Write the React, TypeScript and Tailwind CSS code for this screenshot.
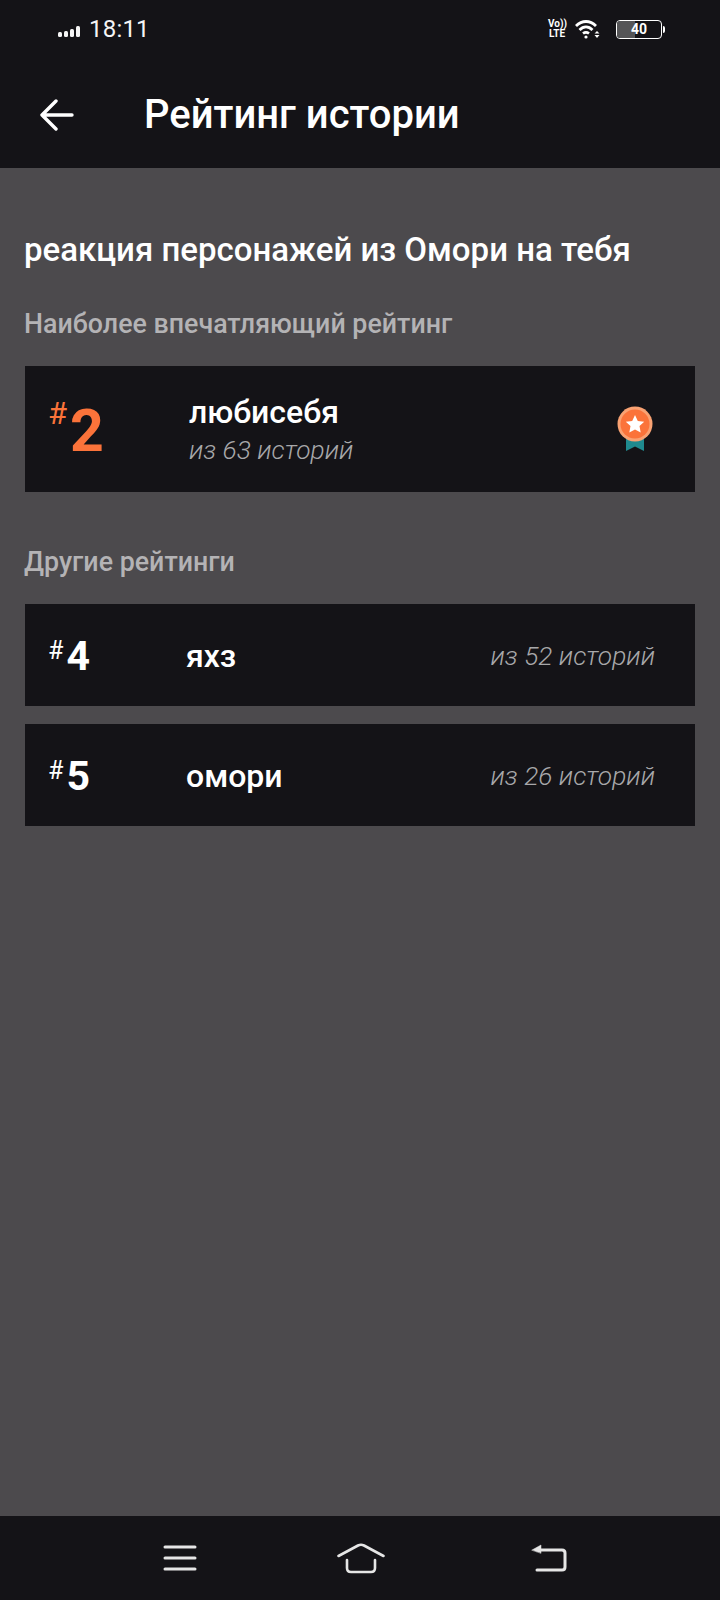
function StatusBar() {
  return (
    <div className="h-[60px] flex items-start justify-between pl-[58px] pr-[55px] pt-[14px]">
      <div className="flex items-center gap-[7px]">
        <svg width="24" height="12" viewBox="0 0 24 12" fill="#f5f5f5" className="mt-[3px]">
          <rect x="0" y="7" width="4" height="5" rx="1.5" />
          <rect x="6" y="6" width="4" height="6" rx="1.5" />
          <rect x="12" y="4" width="4" height="8" rx="1.5" />
          <rect x="18" y="1" width="4" height="11" rx="1.5" />
        </svg>
        <span className="text-[24px] leading-[30px] text-[#f5f5f5] tracking-[0.2px]">18:11</span>
      </div>
      <div className="flex items-center h-[30px]">
        <div className="w-[18px] text-white text-[10px] leading-[10px] font-bold text-center">
          <div>Vo))</div>
          <div>LTE</div>
        </div>
        <svg width="26" height="20" viewBox="0 0 26 20" fill="none" stroke="#fff" strokeWidth="2.8" className="ml-[9px]">
          <path d="M1 7 C7 1 15 1 21 7" />
          <path d="M4.5 11 C8.5 7 13.5 7 17.5 11" />
          <path d="M8 14.5 C10 13 12 13 14 14.5" />
          <circle cx="11" cy="18" r="1.6" fill="#fff" stroke="none" />
          <path d="M22 12 L24.5 14.5 H19.5 Z M22 19 L24.5 16 H19.5 Z" fill="#fff" stroke="none" />
        </svg>
        <div className="ml-[15px] flex items-center">
          <div className="relative w-[46px] h-[19px] border-[1.5px] border-white rounded-[4px] overflow-hidden">
            <div className="h-full w-[18px] bg-[#555557]" />
            <span className="absolute inset-0 flex items-center justify-center text-[14px] font-bold text-white">40</span>
          </div>
          <div className="w-[2px] h-[7px] ml-[1px] bg-white rounded-r-sm" />
        </div>
      </div>
    </div>
  );
}

function Header() {
  return (
    <div className="h-[108px] flex items-center pl-[40px] pt-[1px]">
      <svg width="34" height="32" viewBox="0 0 34 32" fill="none" stroke="#fff" strokeWidth="3.4" strokeLinecap="round" strokeLinejoin="round">
        <path d="M16 2 L2 16 L16 30 M2 16 H32" />
      </svg>
      <h1 className="ml-[70px] text-[40px] leading-[48px] font-medium text-white">Рейтинг истории</h1>
    </div>
  );
}

function SmallRow({ rank, name, total }: { rank: number; name: string; total: string }) {
  return (
    <div className="h-[102px] bg-[#141317] flex items-center pl-[23px] pr-[40px] pt-[1px]">
      <div className="w-[138px] flex items-start text-white">
        <span className="mt-[3px] text-[25px] leading-[28px]">#</span>
        <span className="ml-[3px] text-[41px] leading-[44px] font-bold">{rank}</span>
      </div>
      <span className="flex-1 text-[32px] leading-[36px] font-medium text-white">{name}</span>
      <span className="text-[26.3px] leading-[30px] font-light italic text-[#a8a8aa]">{total}</span>
    </div>
  );
}

function Medal() {
  return (
    <svg width="36" height="46" viewBox="0 0 36 46">
      <path d="M9 26 H27 V45 L18 40.5 L9 45 Z" fill="#1f8a8f" />
      <circle cx="18" cy="18" r="17.5" fill="#f9a273" />
      <circle cx="18" cy="18" r="14.5" fill="#fb733a" />
      <path
        d="M18 9 L20.8 14.9 L27.2 15.7 L22.5 20.1 L23.7 26.5 L18 23.4 L12.3 26.5 L13.5 20.1 L8.8 15.7 L15.2 14.9 Z"
        fill="#fff"
      />
    </svg>
  );
}

export default function App() {
  return (
    <div className="w-[720px] h-[1600px] flex flex-col bg-[#4c4a4d] font-['Roboto',sans-serif]">
      <div className="bg-[#141317]">
        <StatusBar />
        <Header />
      </div>

      <main className="flex-1 px-[25px]">
        <h2 className="-ml-[1px] mt-[62px] text-[33px] leading-[40px] font-medium text-white">
          реакция персонажей из Омори на тебя
        </h2>
        <h3 className="-ml-[1px] mt-[38px] text-[26.8px] leading-[32px] font-medium text-[#b4b3b5]">Наиболее впечатляющий рейтинг</h3>

        <div className="mt-[26px] h-[126px] bg-[#141317] flex items-center pl-[23px] pr-[42px]">
          <div className="w-[141px] flex items-start text-[#fb733a]">
            <span className="text-[31px] leading-[36px]">#</span>
            <span className="ml-[3px] mt-[3px] text-[59px] leading-[64px] font-bold">2</span>
          </div>
          <div className="flex-1 pt-[2px]">
            <div className="text-[32px] leading-[38px] font-medium text-white">любисебя</div>
            <div className="mt-[2px] text-[26.3px] leading-[34px] font-light italic text-[#a8a8aa]">из 63 историй</div>
          </div>
          <Medal />
        </div>

        <h3 className="-ml-[1px] mt-[54px] text-[26.8px] leading-[32px] font-medium text-[#b4b3b5]">Другие рейтинги</h3>

        <div className="mt-[26px] flex flex-col gap-[18px]">
          <SmallRow rank={4} name="яхз" total="из 52 историй" />
          <SmallRow rank={5} name="омори" total="из 26 историй" />
        </div>
      </main>

      <nav className="h-[84px] bg-[#141317] flex items-start justify-between pl-[163px] pr-[153px] pt-[27px]">
        <svg width="34" height="28" viewBox="0 0 34 28" fill="none" stroke="#e6e6e6" strokeWidth="3" strokeLinecap="round" className="mt-[1px]">
          <path d="M2 3 H32 M2 14 H32 M2 25 H32" />
        </svg>
        <svg width="48" height="31" viewBox="0 0 48 31" fill="none" stroke="#e6e6e6" strokeWidth="2.6" strokeLinecap="round" strokeLinejoin="round" className="-ml-[6px]">
          <path d="M1.5 13 L21 2.5 Q24 1 27 2.5 L46.5 13" />
          <path d="M10 17 V25 Q10 29 14 29 H34 Q38 29 38 25 V17" />
        </svg>
        <svg width="36" height="28" viewBox="0 0 36 28" fill="none" stroke="#e6e6e6" strokeWidth="3" strokeLinecap="round" strokeLinejoin="round" className="mt-[1px]">
          <path d="M6 6 H31 Q34 6 34 9 V23 Q34 26 31 26 H6" />
          <path d="M1 6 L10 1 V9 Z" fill="#e6e6e6" strokeWidth="0.5" />
        </svg>
      </nav>
    </div>
  );
}
